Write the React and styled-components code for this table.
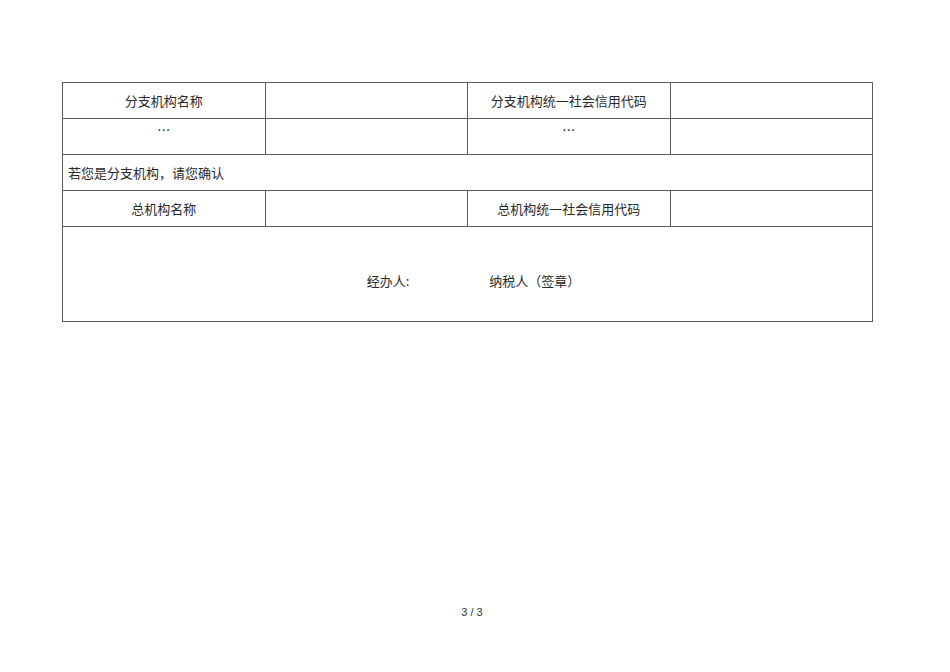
import React from 'react';
import styled, { createGlobalStyle } from 'styled-components';

const GlobalStyle = createGlobalStyle`
  html, body {
    margin: 0;
    padding: 0;
    background: #fff;
  }
  body {
    font-family: "Liberation Sans", "Noto Sans CJK SC", sans-serif;
    color: #222;
  }
`;

const Page = styled.div`
  width: 950px;
  height: 672px;
  box-sizing: border-box;
  padding: 82px 0 0 62px;
  display: flex;
  flex-direction: column;
`;

const Table = styled.table`
  width: 811px;
  border-collapse: collapse;
  table-layout: fixed;
  font-family: "Noto Sans CJK SC", sans-serif;
  font-size: 13px;
  color: #2a2a2a;
`;

const Cell = styled.td`
  border: 1px solid #5a5a5a;
  height: 36px;
  padding: 0 5px;
  box-sizing: border-box;
  text-align: ${p => (p.$left ? 'left' : 'center')};
  vertical-align: ${p => (p.$top ? 'top' : 'middle')};
  padding-top: ${p => (p.$top ? '2px' : '0')};
  line-height: 18px;
`;

const SignCell = styled.td`
  border: 1px solid #5a5a5a;
  height: 95px;
  padding: 12px 0 0;
  box-sizing: border-box;
  vertical-align: middle;
`;

const SignLine = styled.div`
  display: flex;
  justify-content: center;
  gap: 80px;
  padding-left: 12px;
`;

const Footer = styled.div`
  width: 810px;
  margin-top: 284px;
  text-align: center;
  font-family: "Liberation Sans", sans-serif;
  font-size: 11px;
  color: #333;
  padding-left: 10px;
  box-sizing: border-box;
`;

const App = () => (
  <>
    <GlobalStyle />
    <Page>
      <Table>
        <tbody>
          <tr>
            <Cell>分支机构名称</Cell>
            <Cell />
            <Cell>分支机构统一社会信用代码</Cell>
            <Cell />
          </tr>
          <tr>
            <Cell $top>…</Cell>
            <Cell />
            <Cell $top>…</Cell>
            <Cell />
          </tr>
          <tr>
            <Cell $left colSpan={4}>若您是分支机构，请您确认</Cell>
          </tr>
          <tr>
            <Cell>总机构名称</Cell>
            <Cell />
            <Cell>总机构统一社会信用代码</Cell>
            <Cell />
          </tr>
          <tr>
            <SignCell colSpan={4}>
              <SignLine>
                <span>经办人:</span>
                <span>纳税人（签章）</span>
              </SignLine>
            </SignCell>
          </tr>
        </tbody>
      </Table>
      <Footer>3 / 3</Footer>
    </Page>
  </>
);

export default App;
